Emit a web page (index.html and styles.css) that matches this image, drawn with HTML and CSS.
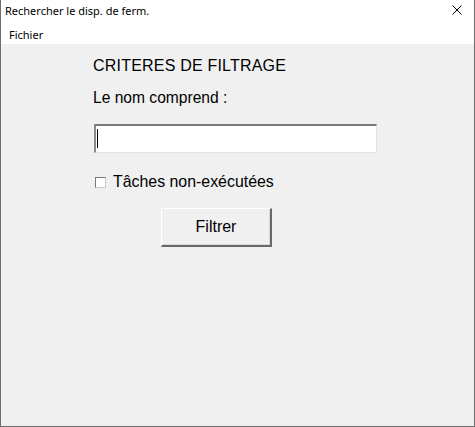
FILE: index.html
```html
<!DOCTYPE html>
<html lang="fr">
<head>
<meta charset="utf-8">
<title>Rechercher le disp. de ferm.</title>
<link rel="stylesheet" href="styles.css">
</head>
<body>
<div class="window">
  <div class="titlebar">
    <span class="title">Rechercher le disp. de ferm.</span>
    <span class="close" aria-label="Fermer">
      <svg width="10" height="10" viewBox="0 0 10 10"><path d="M0.5 0.5 L9.5 9.5 M9.5 0.5 L0.5 9.5" stroke="#000" stroke-width="1" fill="none"/></svg>
    </span>
  </div>
  <div class="menubar"><span class="menu-item">Fichier</span></div>
  <div class="client">
    <div class="form">
      <div class="heading">CRITERES DE FILTRAGE</div>
      <div class="label">Le nom comprend :</div>
      <div class="input"><span class="caret"></span></div>
      <label class="check"><span class="box"></span><span>Tâches non-exécutées</span></label>
      <div class="btn-row"><button class="btn">Filtrer</button></div>
    </div>
  </div>
</div>
</body>
</html>
```
FILE: styles.css
```css
* { box-sizing: border-box; }
html, body { margin: 0; padding: 0; }
body { width: 475px; height: 427px; overflow: hidden; background: #f0f0f0; }
.window {
  width: 475px; height: 427px;
  border: 1px solid #6e6e6e; border-top: none;
  display: flex; flex-direction: column;
  background: #f0f0f0;
}
.titlebar {
  height: 22px; background: #fff;
  display: flex; align-items: center; justify-content: space-between;
  padding: 0 12px 0 4px;
  font-family: "Noto Sans", "Open Sans", sans-serif; font-size: 11px; color: #000;
}
.title { position: relative; top: -1px; }
.close { display: flex; width: 10px; height: 10px; margin-top: -2px; }
.menubar {
  height: 22px; background: #fff;
  display: flex; align-items: center; padding-left: 8px;
  font-family: "Noto Sans", "Open Sans", sans-serif; font-size: 11px; color: #000;
}
.menu-item { position: relative; top: 1px; }
.client { flex: 1; background: #f0f0f0; }
.form {
  margin-left: 92px; padding-top: 12px;
  display: flex; flex-direction: column;
  font-family: "Liberation Sans", Arial, sans-serif; color: #000;
}
.heading { font-size: 16px; line-height: 20px; letter-spacing: 0.2px; }
.label { font-size: 15.6px; line-height: 20px; margin-top: 12px; }
.input {
  margin-top: 16px; margin-left: 1px;
  width: 283px; height: 29px; background: #fff;
  border-style: solid; border-width: 2px 1px 1px 2px;
  border-color: #7a7a7a #e3e3e3 #e3e3e3 #8a8a8a;
  position: relative;
}
.caret { position: absolute; left: 1px; top: 3px; width: 1px; height: 19px; background: #000; }
.check {
  display: flex; align-items: center; gap: 7px;
  margin-top: 19px; margin-left: 2px;
  font-size: 15.9px; line-height: 20px;
}
.box { width: 11px; height: 11px; background: #fff; border: 1px solid #7a7a7a; border-right-color: #c8c8c8; border-bottom-color: #c8c8c8; }
.btn-row { margin-top: 16px; padding-left: 68px; }
.btn {
  width: 111px; height: 39px;
  background: #f0f0f0;
  border-style: solid; border-width: 1px 2px 2px 1px;
  border-color: #fff #696969 #696969 #fff;
  box-shadow: inset -1px -1px 0 #d8d8d8;
  font-family: "Liberation Sans", Arial, sans-serif; font-size: 16px; color: #000;
  padding: 0; margin: 0;
}
```
